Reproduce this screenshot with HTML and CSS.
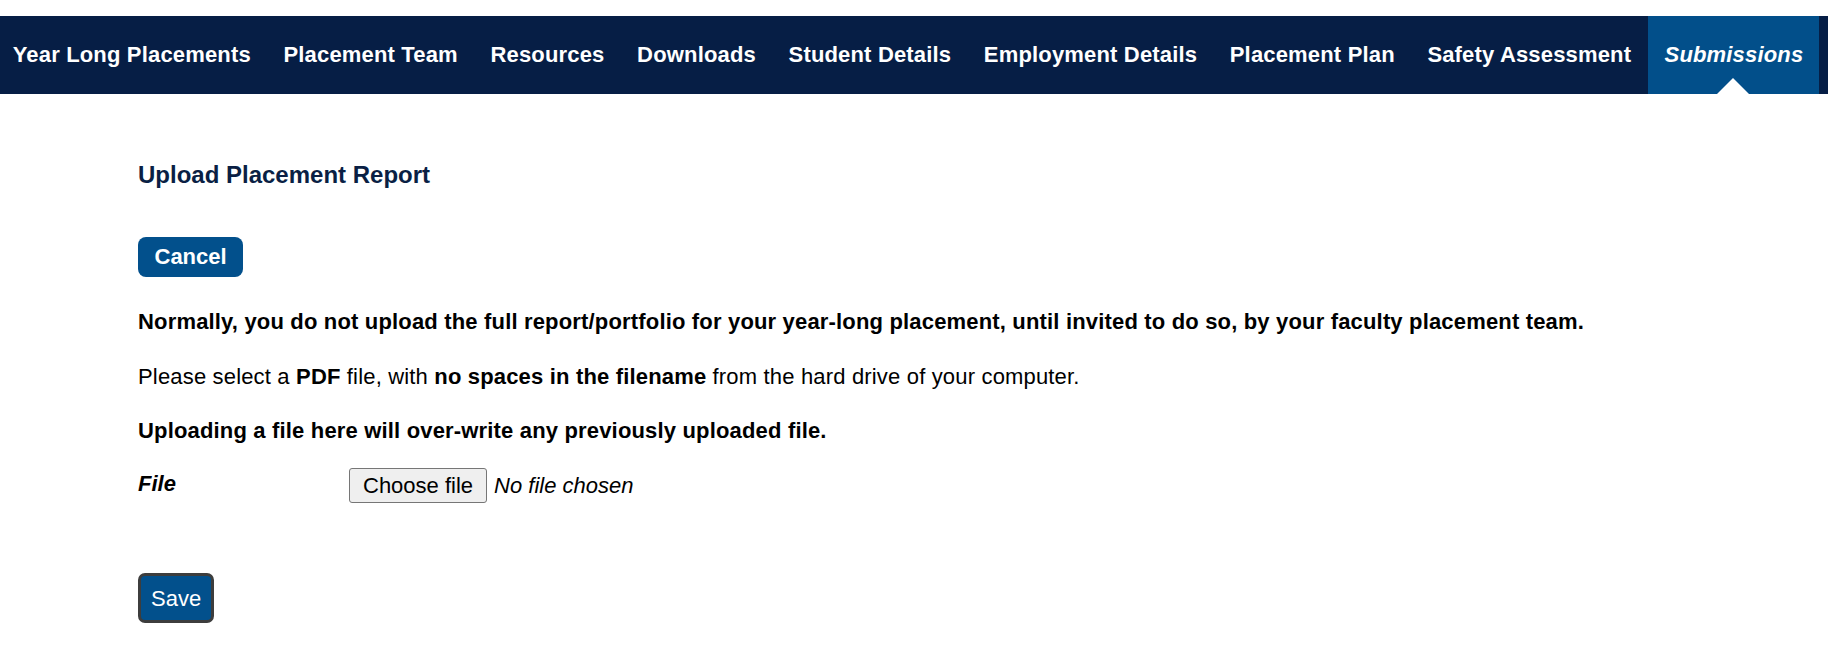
FILE: index.html
```html
<!DOCTYPE html>
<html lang="en">
<head>
<meta charset="utf-8">
<title>Submissions - Upload Placement Report</title>
<link rel="stylesheet" href="styles.css">
</head>
<body>
<nav class="topnav">
  <ul class="nav-list">
    <li class="nav-item"><a href="#">Year Long Placements</a></li>
    <li class="nav-item"><a href="#">Placement Team</a></li>
    <li class="nav-item"><a href="#">Resources</a></li>
    <li class="nav-item"><a href="#">Downloads</a></li>
    <li class="nav-item"><a href="#">Student Details</a></li>
    <li class="nav-item"><a href="#">Employment Details</a></li>
    <li class="nav-item"><a href="#">Placement Plan</a></li>
    <li class="nav-item"><a href="#">Safety Assessment</a></li>
    <li class="nav-item active"><a href="#">Submissions</a></li>
  </ul>
</nav>
<main class="content">
  <h2 class="page-title">Upload Placement Report</h2>
  <div class="actions"><a class="btn-cancel" href="#">Cancel</a></div>
  <p class="para lead">Normally, you do not upload the full report/portfolio for your year-long placement, until invited to do so, by your faculty placement team.</p>
  <p class="para">Please select a <strong>PDF</strong> file, with <strong>no spaces in the filename</strong> from the hard drive of your computer.</p>
  <p class="para strong">Uploading a file here will over-write any previously uploaded file.</p>
  <div class="field-row">
    <label class="field-label">File</label>
    <div class="file-input">
      <span class="file-btn">Choose file</span>
      <span class="file-status">No file chosen</span>
    </div>
  </div>
  <div class="save-row"><button class="btn-save" type="button">Save</button></div>
</main>
</body>
</html>
```
FILE: styles.css
```css
html, body {
  margin: 0;
  background: #ffffff;
}

body {
  padding-top: 16px;
  font-family: "Liberation Sans", Arial, Helvetica, sans-serif;
  color: #000000;
}

.topnav {
  background: #061e45;
  height: 78px;
}

.nav-list {
  display: flex;
  height: 100%;
  margin: 0;
  padding: 0;
  list-style: none;
}

.nav-item {
  position: relative;
  display: flex;
  align-items: center;
  padding: 0 16.3px;
  font-size: 22px;
  font-weight: bold;
  letter-spacing: 0.17px;
  white-space: nowrap;
}

.nav-item:first-child {
  padding-left: 12.7px;
}

.nav-item a {
  color: #ffffff;
  text-decoration: none;
}

.nav-item.active {
  background: #024f8a;
  font-style: italic;
  padding: 0 16px 0 17px;
}

.nav-item.active::after {
  content: "";
  position: absolute;
  left: 50%;
  bottom: 0;
  transform: translateX(-50%);
  border-left: 16px solid transparent;
  border-right: 16px solid transparent;
  border-bottom: 16px solid #ffffff;
}

.content {
  padding: 67px 0 0 138px;
}

.page-title {
  margin: 0;
  font-size: 24px;
  line-height: 28px;
  font-weight: bold;
  color: #0a1f44;
}

.actions {
  margin-top: 48px;
}

.btn-cancel {
  display: inline-block;
  padding: 7px 16.5px;
  font-size: 22px;
  line-height: 26px;
  font-weight: bold;
  color: #ffffff;
  background: #02508c;
  border-radius: 8px;
  text-decoration: none;
}

.para {
  margin: 30px 0 0;
  font-size: 22px;
  line-height: 25px;
  letter-spacing: 0.17px;
}

.para.lead {
  margin-top: 32px;
  font-weight: bold;
}

.para.strong {
  margin-top: 29px;
  font-weight: bold;
}

.field-row {
  display: flex;
  align-items: flex-start;
  margin-top: 25px;
}

.field-label {
  width: 211px;
  padding-top: 3px;
  font-size: 22px;
  line-height: 25px;
  font-weight: bold;
  font-style: italic;
}

.file-input {
  display: flex;
  align-items: center;
  font-size: 22px;
  line-height: 25px;
}

.file-btn {
  display: inline-block;
  padding: 4px 13px;
  background: #efefef;
  border: 1px solid #767676;
  border-radius: 3px;
  color: #000000;
}

.file-status {
  margin-left: 7px;
  font-style: italic;
}

.save-row {
  margin-top: 70px;
}

.btn-save {
  display: inline-block;
  margin: 0;
  padding: 9.5px 10px;
  font-family: "Liberation Sans", Arial, Helvetica, sans-serif;
  font-size: 22px;
  line-height: 25px;
  color: #ffffff;
  background: #02508c;
  border: 3px solid #3d3d3d;
  border-radius: 7px;
}
```
